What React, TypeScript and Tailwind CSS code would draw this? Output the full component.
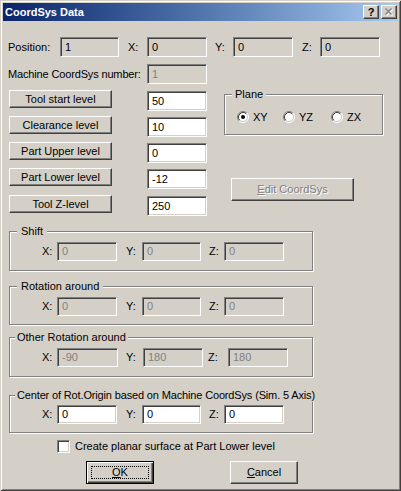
import React from 'react';

const sunken =
  'border border-t-[#808080] border-l-[#808080] border-b-white border-r-white shadow-[inset_1px_1px_0_#404040,inset_-1px_-1px_0_#d4d0c8]';
const raised =
  'border border-t-white border-l-white border-b-[#404040] border-r-[#404040] shadow-[inset_-1px_-1px_0_#808080] bg-[#d4d0c8]';

function Field({ value, className, white = false, dim = false }: { value: string; className: string; white?: boolean; dim?: boolean }) {
  return (
    <div
      className={`${sunken} ${className} flex items-center pl-[4px] leading-none ${white ? 'bg-white' : 'bg-[#d4d0c8]'} ${dim ? 'text-[#808080]' : 'text-black'}`}
    >
      {value}
    </div>
  );
}

function Btn({ children, className, disabled = false }: { children: React.ReactNode; className: string; disabled?: boolean }) {
  return (
    <button
      className={`${raised} ${className} flex items-center justify-center leading-none ${disabled ? 'text-[#808080] [text-shadow:1px_1px_0_#fff]' : 'text-black'}`}
    >
      {children}
    </button>
  );
}

function Group({ label, labelClass, className, children }: { label: string; labelClass: string; className: string; children?: React.ReactNode }) {
  return (
    <div className={`relative border border-[#808080] shadow-[1px_1px_0_#fff,inset_1px_1px_0_#fff] ${className}`}>
      <span className={`absolute top-[-8px] bg-[#d4d0c8] leading-[14px] whitespace-nowrap ${labelClass}`}>{label}</span>
      {children}
    </div>
  );
}

function Radio({ checked }: { checked?: boolean }) {
  return (
    <svg width="12" height="12" viewBox="0 0 12 12" className="shrink-0">
      <circle cx="6" cy="6" r="4.5" fill="#fff" />
      <path d="M2.11 9.89 A5.5 5.5 0 0 1 9.89 2.11" stroke="#808080" fill="none" />
      <path d="M9.89 2.11 A5.5 5.5 0 0 1 2.11 9.89" stroke="#fff" fill="none" />
      <path d="M2.82 9.18 A4.5 4.5 0 0 1 9.18 2.82" stroke="#404040" fill="none" />
      <path d="M9.18 2.82 A4.5 4.5 0 0 1 2.82 9.18" stroke="#d4d0c8" fill="none" />
      {checked && <circle cx="6" cy="6" r="2" fill="#000" />}
    </svg>
  );
}

function XYZRow({ values, white = false, dim = true, alt = false }: { values: string[]; white?: boolean; dim?: boolean; alt?: boolean }) {
  if (alt) {
    return (
      <div className="flex items-center pl-[32px]">
        <span className="w-[15px]">X:</span>
        <Field value={values[0]} className="w-[61px] h-[19px]" white={white} dim={dim} />
        <span className="ml-[8px] w-[17px]">Y:</span>
        <Field value={values[1]} className="w-[60px] h-[19px]" white={white} dim={dim} />
        <span className="ml-[5px] w-[20px]">Z:</span>
        <Field value={values[2]} className="w-[60px] h-[19px]" white={white} dim={dim} />
      </div>
    );
  }
  return (
    <div className="flex items-center pl-[32px]">
      <span className="w-[15px]">X:</span>
      <Field value={values[0]} className="w-[60px] h-[19px]" white={white} dim={dim} />
      <span className="ml-[9px] w-[16px]">Y:</span>
      <Field value={values[1]} className="w-[59px] h-[19px]" white={white} dim={dim} />
      <span className="ml-[8px] w-[15px]">Z:</span>
      <Field value={values[2]} className="w-[60px] h-[19px]" white={white} dim={dim} />
    </div>
  );
}

const levels = ['Tool start level', 'Clearance level', 'Part Upper level', 'Part Lower level', 'Tool Z-level'];
const levelValues = ['50', '10', '0', '-12', '250'];

export default function App() {
  return (
    <div className="w-[401px] h-[491px] bg-[#d4d0c8] p-[3px] text-[11px] text-black font-['Liberation_Sans',Arial,sans-serif] shadow-[inset_1px_1px_0_#d4d0c8,inset_-1px_-1px_0_#404040,inset_2px_2px_0_#fff,inset_-2px_-2px_0_#808080] overflow-hidden">
      {/* title bar */}
      <div className="h-[18px] flex items-center justify-between pl-[2px] pr-[1px] bg-linear-to-r from-[#0a246a] to-[#a6caf0]">
        <span className="text-white font-bold leading-none">CoordSys Data</span>
        <div className="flex gap-[2px]">
          <div className={`${raised} w-[16px] h-[14px] flex items-center justify-center font-bold text-[11px] leading-none`}>?</div>
          <div className={`${raised} w-[16px] h-[14px] flex items-center justify-center`}>
            <svg width="9" height="8" viewBox="0 0 9 8">
              <path d="M1.5 1.5 L7.5 7.5 M7.5 1.5 L1.5 7.5" stroke="#fff" strokeWidth="1.4" />
              <path d="M0.5 0.5 L6.5 6.5 M6.5 0.5 L0.5 6.5" stroke="#808080" strokeWidth="1.4" />
            </svg>
          </div>
        </div>
      </div>

      <div className="pl-[5px]">
        {/* position */}
        <div className="mt-[16px] h-[20px] flex items-center">
          <span className="w-[52px]">Position:</span>
          <Field value="1" className="w-[59px] h-[20px]" />
          <span className="ml-[9px] w-[19px]">X:</span>
          <Field value="0" className="w-[60px] h-[20px]" />
          <span className="ml-[8px] w-[18px]">Y:</span>
          <Field value="0" className="w-[60px] h-[20px]" />
          <span className="ml-[9px] w-[18px]">Z:</span>
          <Field value="0" className="w-[60px] h-[20px]" />
        </div>

        <div className="mt-[7px] h-[20px] flex items-center">
          <span className="w-[139px] tracking-[-0.15px]">Machine CoordSys number:</span>
          <Field value="1" className="w-[60px] h-[20px]" dim />
        </div>

        {/* levels + plane */}
        <div className="mt-[6px] flex">
          <div className="ml-[1px] flex flex-col gap-[5px]">
            {levels.map((l, i) => (
              <div key={l} className={`h-[21px] flex items-start ${i === 4 ? 'mt-[1px]' : ''}`}>
                <Btn className="w-[103px] h-[18px]">{l}</Btn>
                <Field value={levelValues[i]} className="ml-[35px] mt-[1px] w-[60px] h-[20px]" white />
              </div>
            ))}
          </div>
          <div className="ml-[17px] flex flex-col items-start">
            <Group label="Plane" labelClass="left-[7px] px-[3px]" className="mt-[4px] w-[159px] h-[41px]">
              <div className="pt-[16px] pl-[12px] flex items-center">
                <div className="w-[46px] flex items-center">
                  <Radio checked />
                  <span className="ml-[4px] leading-none">XY</span>
                </div>
                <div className="w-[48px] flex items-center">
                  <Radio />
                  <span className="ml-[4px] leading-none">YZ</span>
                </div>
                <div className="flex items-center">
                  <Radio />
                  <span className="ml-[4px] leading-none">ZX</span>
                </div>
              </div>
            </Group>
            <Btn className="mt-[43px] ml-[7px] w-[123px] h-[23px]" disabled>
              <span>
                <span className="underline">E</span>dit CoordSys
              </span>
            </Btn>
          </div>
        </div>

        {/* groups */}
        <div className="ml-[1px]">
          <Group label="Shift" labelClass="left-[7px] px-[4px]" className="mt-[15px] w-[304px] h-[40px]">
            <div className="pt-[10px]">
              <XYZRow values={['0', '0', '0']} />
            </div>
          </Group>
          <Group label="Rotation around" labelClass="left-[7px] px-[4px]" className="mt-[15px] w-[304px] h-[39px]">
            <div className="pt-[10px]">
              <XYZRow values={['0', '0', '0']} />
            </div>
          </Group>
          <Group label="Other Rotation around" labelClass="left-[5px] px-[2px]" className="mt-[12px] w-[304px] h-[40px]">
            <div className="pt-[10px]">
              <XYZRow values={['-90', '180', '180']} alt />
            </div>
          </Group>
          <Group
            label="Center of Rot.Origin based on Machine CoordSys (Sim. 5 Axis)"
            labelClass="left-[5px] px-[2px] tracking-[-0.15px]"
            className="mt-[18px] w-[304px] h-[38px]"
          >
            <div className="pt-[9px]">
              <XYZRow values={['0', '0', '0']} white dim={false} />
            </div>
          </Group>
        </div>

        {/* checkbox */}
        <div className="mt-[7px] h-[13px] flex items-center">
          <div className={`${sunken} ml-[49px] w-[13px] h-[13px] bg-white`} />
          <span className="ml-[5px] leading-none">Create planar surface at Part Lower level</span>
        </div>

        {/* buttons */}
        <div className="mt-[8px] flex">
          <button className="relative ml-[78px] w-[68px] h-[23px] border border-black bg-[#d4d0c8] shadow-[inset_1px_1px_0_#fff,inset_-1px_-1px_0_#404040,inset_-2px_-2px_0_#808080] flex items-center justify-center leading-none">
            <span className="absolute inset-[4px] border border-dotted border-black" />
            <span>
              <span className="underline">O</span>K
            </span>
          </button>
          <Btn className="ml-[76px] w-[68px] h-[23px]">
            <span>
              <span className="underline">C</span>ancel
            </span>
          </Btn>
        </div>
      </div>
    </div>
  );
}
